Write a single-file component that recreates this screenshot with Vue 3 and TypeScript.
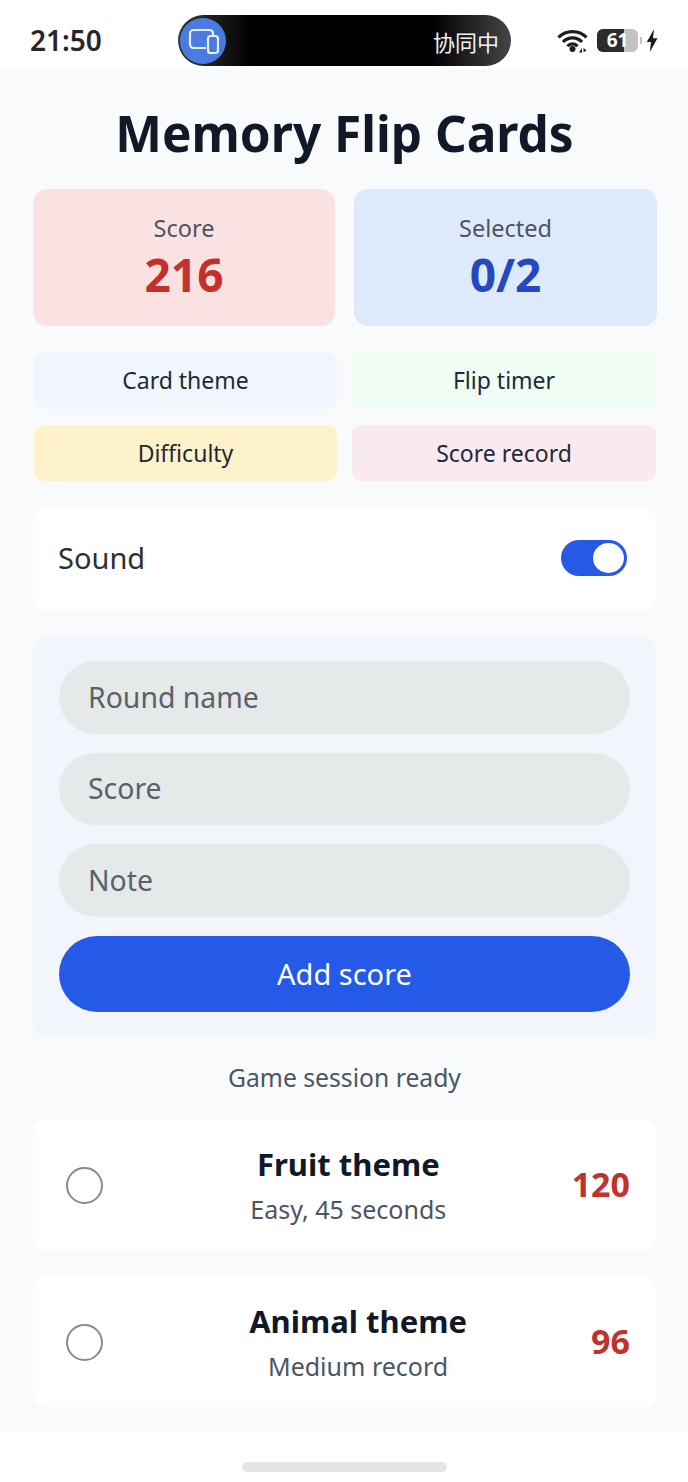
<script setup lang="ts">
interface Stat {
  label: string;
  value: string;
  tone: string;
}

interface Round {
  name: string;
  detail: string;
  score: number;
}

const stats: Stat[] = [
  { label: "Score", value: "216", tone: "red" },
  { label: "Selected", value: "0/2", tone: "blue" },
];

const tools = [
  { label: "Card theme", tone: "sky" },
  { label: "Flip timer", tone: "mint" },
  { label: "Difficulty", tone: "sand" },
  { label: "Score record", tone: "rose" },
];

const fields = ["Round name", "Score", "Note"];

const rounds: Round[] = [
  { name: "Fruit theme", detail: "Easy, 45 seconds", score: 120 },
  { name: "Animal theme", detail: "Medium record", score: 96 },
];
</script>

<template>
  <div class="phone">
    <header class="status-bar">
      <span class="clock">21:50</span>
      <div class="island">
        <span class="island-icon">
          <svg width="32" height="28" viewBox="0 0 32 28" fill="none" stroke="#e8f0ff" stroke-width="2.2">
            <path d="M19 21H6.500a3.500 3.500 0 0 1-3.500-3.500V6.500A3.500 3.500 0 0 1 6.500 3h16A3.500 3.500 0 0 1 26 6.500V8" />
            <rect x="21" y="9" width="10" height="17" rx="2.800" />
          </svg>
        </span>
        <span class="island-text">协同中</span>
      </div>
      <div class="status-icons">
        <svg width="31" height="24" viewBox="0 0 31 24" fill="none" stroke="#1c1c1c" stroke-width="3.200">
          <path d="M1.500 8.500a19.500 19.500 0 0 1 28 0" />
          <path d="M6 13a13 13 0 0 1 19 0" />
          <path d="M10.500 17.300a6.500 6.500 0 0 1 10 0" />
          <circle cx="15.500" cy="20" r="3" fill="#1c1c1c" stroke="none" />
          <path d="M22 23.500l3-4.500v4.500zM26.500 19v4.500l3-2.200z" fill="#1c1c1c" stroke="none" />
        </svg>
        <div class="battery">
          <span class="battery-fill"></span>
          <span class="battery-level">61</span>
        </div>
        <span class="battery-cap"></span>
        <svg width="12" height="23" viewBox="0 0 12 23" fill="#1c1c1c">
          <path d="M8 0 .8 13h4.200L3.800 23 11.500 9.200H7z" />
        </svg>
      </div>
    </header>

    <main class="page">
      <h1>Memory Flip Cards</h1>

      <section class="stats">
        <div v-for="stat in stats" :key="stat.label" class="stat" :class="stat.tone">
          <span class="stat-label">{{ stat.label }}</span>
          <strong class="stat-value">{{ stat.value }}</strong>
        </div>
      </section>

      <section class="tools">
        <button v-for="tool in tools" :key="tool.label" class="tool" :class="tool.tone">
          {{ tool.label }}
        </button>
      </section>

      <section class="sound-row">
        <span>Sound</span>
        <span class="switch"><span class="knob"></span></span>
      </section>

      <section class="form">
        <input v-for="field in fields" :key="field" class="field" type="text" :placeholder="field" />
        <button class="add-button">Add score</button>
      </section>

      <p class="session">Game session ready</p>

      <section class="rounds">
        <article v-for="round in rounds" :key="round.name" class="round">
          <span class="radio"></span>
          <div class="round-text">
            <h2>{{ round.name }}</h2>
            <p>{{ round.detail }}</p>
          </div>
          <strong class="round-score">{{ round.score }}</strong>
        </article>
      </section>
    </main>

    <footer class="home-area">
      <span class="home-bar"></span>
    </footer>
  </div>
</template>

<style>
body {
  background: #fff;
}
</style>

<style scoped>
.phone {
  width: 688px;
  height: 1482px;
  display: flex;
  flex-direction: column;
  overflow: hidden;
  font-family: "Noto Sans", "Noto Sans CJK SC", sans-serif;
  background: #fff;
}

.status-bar {
  height: 70px;
  flex: none;
  display: flex;
  align-items: center;
  padding: 0 30px;
  background: #fff;
  box-sizing: border-box;
}

.clock {
  width: 148px;
  font-size: 28px;
  font-weight: 600;
  color: #262626;
  margin-top: 9px;
}

.island {
  width: 333px;
  height: 51px;
  margin-top: 11px;
  display: flex;
  align-items: center;
  justify-content: space-between;
  padding: 0 12px 0 2px;
  border-radius: 26px;
  box-sizing: border-box;
  background: linear-gradient(90deg, #3a3a3a 0%, #000 22%, #000 76%, #454545 100%);
}

.island-icon {
  width: 46px;
  height: 46px;
  display: flex;
  align-items: center;
  justify-content: center;
  border-radius: 50%;
  background: #4a7be0;
}

.island-text {
  font-size: 22px;
  color: #f2f2f2;
}

.status-icons {
  margin-left: auto;
  margin-top: 11px;
  display: flex;
  align-items: center;
}

.battery {
  position: relative;
  width: 41px;
  height: 23px;
  margin-left: 9px;
  border-radius: 6px;
  background: #c2c2c2;
  display: flex;
  align-items: center;
  justify-content: center;
}

.battery-fill {
  position: absolute;
  inset: 0 34% 0 0;
  border-radius: 6px 0 0 6px;
  background: #2c2c2c;
}

.battery-level {
  position: relative;
  font-size: 19px;
  line-height: 23px;
  font-weight: 700;
  color: #fff;
}

.battery-cap {
  width: 2px;
  height: 7px;
  margin: 0 4px 0 2px;
  background: #c2c2c2;
}

.page {
  flex: 1;
  padding: 0 32px 0 33px;
  background: #f8fafc;
}

h1 {
  margin: 26px 0 0;
  height: 74px;
  line-height: 74px;
  text-align: center;
  font-size: 49.500px;
  font-weight: 700;
  color: #111827;
}

.stats {
  display: grid;
  grid-template-columns: 302px 303px;
  justify-content: space-between;
  margin: 19px -1px 0 0;
}

.stat {
  height: 137px;
  display: flex;
  flex-direction: column;
  align-items: center;
  justify-content: center;
  border-radius: 14px;
}

.stat.red {
  background: #fbe2e2;
  color: #c5302c;
}

.stat.blue {
  background: #dfe9fc;
  color: #2547c0;
}

.stat-label {
  font-size: 23.500px;
  line-height: 30px;
  color: #4b5563;
}

.stat-value {
  margin-top: 2px;
  font-size: 46px;
  line-height: 58px;
  font-weight: 700;
}

.tools {
  display: grid;
  grid-template-columns: 303px 304px;
  justify-content: space-between;
  row-gap: 16px;
  margin: 26px 0 0 1px;
}

.tool {
  height: 56.500px;
  border: none;
  border-radius: 10px;
  font-family: inherit;
  font-size: 23px;
  color: #1f2937;
}

.tool.sky {
  background: #f0f5fe;
}

.tool.mint {
  background: #effdf5;
}

.tool.sand {
  background: #fdf2c9;
}

.tool.rose {
  background: #f9e9f1;
}

.sound-row {
  height: 103px;
  margin-top: 26px;
  padding: 0 29px 2px 25px;
  display: flex;
  align-items: center;
  justify-content: space-between;
  border-radius: 14px;
  background: #fff;
  font-size: 29px;
  color: #2b2f36;
  box-sizing: border-box;
}

.switch {
  width: 66px;
  height: 36px;
  padding: 3px;
  display: flex;
  justify-content: flex-end;
  border-radius: 18px;
  background: #2559e6;
  box-sizing: border-box;
}

.knob {
  width: 31px;
  height: 30px;
  border-radius: 50%;
  background: #fff;
}

.form {
  height: 401px;
  margin-top: 26px;
  padding: 25px 26px 0;
  border-radius: 14px;
  background: #f3f5fd;
  box-sizing: border-box;
  display: flex;
  flex-direction: column;
  gap: 19px;
}

.field {
  height: 72.500px;
  padding: 0 29px 1px;
  border: none;
  border-radius: 37px;
  background: #e5e9ea;
  box-sizing: border-box;
  font-family: inherit;
  font-size: 28.400px;
}

.field::placeholder {
  color: #5b6168;
  opacity: 1;
}

.add-button {
  height: 76.500px;
  padding-bottom: 2px;
  border: none;
  border-radius: 39px;
  background: #2559e8;
  color: #fff;
  font-family: inherit;
  font-size: 29px;
}

.session {
  margin: 22px 0 0;
  height: 38px;
  line-height: 38px;
  text-align: center;
  font-size: 24.700px;
  color: #4b5563;
}

.rounds {
  display: flex;
  flex-direction: column;
  gap: 27px;
  margin-top: 23px;
}

.round {
  height: 130px;
  display: flex;
  align-items: center;
  justify-content: space-between;
  padding: 0 26px 0 33px;
  border-radius: 14px;
  background: #fff;
}

.radio {
  flex: none;
  width: 33px;
  height: 33px;
  margin-right: 22px;
  border: 2px solid #8a8a8a;
  border-radius: 50%;
  background: #fff;
}

.round-text {
  padding-bottom: 2px;
  text-align: center;
}

.round-text h2 {
  margin: 0;
  font-size: 31px;
  line-height: 46px;
  font-weight: 700;
  color: #111827;
}

.round-text p {
  margin: 4px 0 0;
  font-size: 25px;
  line-height: 36px;
  color: #4b5563;
}

.round-score {
  margin-bottom: 3px;
  font-size: 34px;
  font-weight: 700;
  color: #c0322a;
}

.home-area {
  height: 50px;
  flex: none;
  display: flex;
  justify-content: center;
  padding-top: 30px;
  box-sizing: border-box;
  background: #fff;
}

.home-bar {
  width: 205px;
  height: 10px;
  border-radius: 5px;
  background: #e5e5e5;
}
</style>
